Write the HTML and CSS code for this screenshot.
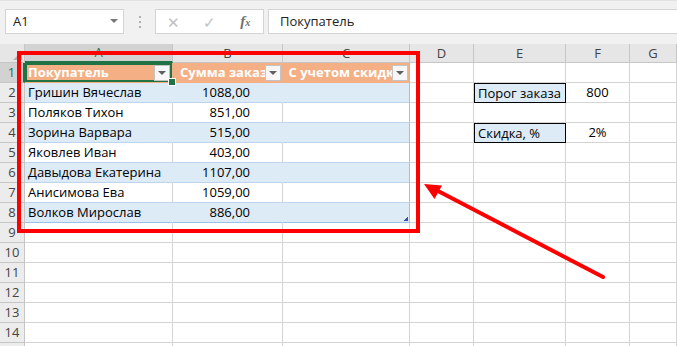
FILE: index.html
```html
<html lang="ru">
<head>
    <meta charset="UTF-8">
    <meta name="viewport" content="width=device-width, initial-scale=1.0">
    <title>Покупатели</title>
    <link rel="stylesheet" href="styles.css">
</head>
<body>

    <div class="toolbar">
        <div class="nameBox">A1<span class="nameArrow"></span></div>
        <div class="dots"><span></span><span></span><span></span></div>
        <div class="fxBox">
            <span class="fxBtn cancel">✕</span>
            <span class="fxBtn enter">✓</span>
            <span class="fxBtn fx"><i>f</i><small>x</small></span>
        </div>
        <div class="formula">Покупатель</div>
    </div>

    <div class="sheet">
        <div class="row colHeads">
            <div class="corner"><span></span></div>
            <div class="colHead active">A</div>
            <div class="colHead">B</div>
            <div class="colHead">C</div>
            <div class="colHead">D</div>
            <div class="colHead">E</div>
            <div class="colHead">F</div>
            <div class="colHead">G</div>
        </div>

        <div class="row">
            <div class="rowHead active">1</div>
            <div class="cell th selected">Покупатель<span class="filter"></span><span class="handle"></span></div>
            <div class="cell th center">Сумма заказа<span class="filter"></span></div>
            <div class="cell th center last">С учетом скидки<span class="filter"></span></div>
            <div class="cell"></div>
            <div class="cell"></div>
            <div class="cell"></div>
            <div class="cell"></div>
        </div>

        <div class="row">
            <div class="rowHead">2</div>
            <div class="cell band">Гришин Вячеслав</div>
            <div class="cell band num">1088,00</div>
            <div class="cell band last"></div>
            <div class="cell"></div>
            <div class="cell param">Порог заказа</div>
            <div class="cell center">800</div>
            <div class="cell"></div>
        </div>

        <div class="row">
            <div class="rowHead">3</div>
            <div class="cell plain">Поляков Тихон</div>
            <div class="cell plain num">851,00</div>
            <div class="cell plain last"></div>
            <div class="cell"></div>
            <div class="cell"></div>
            <div class="cell"></div>
            <div class="cell"></div>
        </div>

        <div class="row">
            <div class="rowHead">4</div>
            <div class="cell band">Зорина Варвара</div>
            <div class="cell band num">515,00</div>
            <div class="cell band last"></div>
            <div class="cell"></div>
            <div class="cell param">Скидка, %</div>
            <div class="cell center">2%</div>
            <div class="cell"></div>
        </div>

        <div class="row">
            <div class="rowHead">5</div>
            <div class="cell plain">Яковлев Иван</div>
            <div class="cell plain num">403,00</div>
            <div class="cell plain last"></div>
            <div class="cell"></div>
            <div class="cell"></div>
            <div class="cell"></div>
            <div class="cell"></div>
        </div>

        <div class="row">
            <div class="rowHead">6</div>
            <div class="cell band">Давыдова Екатерина</div>
            <div class="cell band num">1107,00</div>
            <div class="cell band last"></div>
            <div class="cell"></div>
            <div class="cell"></div>
            <div class="cell"></div>
            <div class="cell"></div>
        </div>

        <div class="row">
            <div class="rowHead">7</div>
            <div class="cell plain">Анисимова Ева</div>
            <div class="cell plain num">1059,00</div>
            <div class="cell plain last"></div>
            <div class="cell"></div>
            <div class="cell"></div>
            <div class="cell"></div>
            <div class="cell"></div>
        </div>

        <div class="row">
            <div class="rowHead">8</div>
            <div class="cell band bottom">Волков Мирослав</div>
            <div class="cell band bottom num">886,00</div>
            <div class="cell band bottom last"><span class="resize"></span></div>
            <div class="cell"></div>
            <div class="cell"></div>
            <div class="cell"></div>
            <div class="cell"></div>
        </div>

        <div id="emptyRows"></div>

        <svg class="markup" width="677" height="302" viewBox="0 44 677 302">
            <rect x="19" y="53" width="399" height="178" fill="none" stroke="#ff0000" stroke-width="4"/>
            <line x1="603" y1="277" x2="438" y2="191" stroke="#ff0000" stroke-width="4" stroke-linecap="round"/>
            <polygon points="424,184 442,185.5 434.5,199" fill="#ff0000"/>
        </svg>
    </div>

    <script>
        // rows 9..14 are empty, plus the sliver of row 15 at the window edge
        var emptyRows = document.getElementById("emptyRows");
        for(var r=9; r<=15; r++){
            var html = '<div class="rowHead">'+(r<15 ? r : '')+'</div>';
            for(var c=0; c<7; c++)
                html += '<div class="cell"></div>';
            var row = document.createElement("div");
            row.className = "row";
            row.innerHTML = html;
            emptyRows.appendChild(row);
        }
    </script>
</body>
</html>
```

FILE: styles.css
```css
body{
    margin: 0;
    font-family: "Open Sans", "Liberation Sans", sans-serif;
    font-size: 13px;
    color: #000;
    background-color: #fff;
    overflow: hidden;
}

.toolbar{
    height: 44px;
    box-sizing: border-box;
    display: flex;
    align-items: flex-start;
    padding: 8px 0 0 5px;
    background-color: #f1f1f1;
    border-top: 1px solid #e2e2e2;
}

.nameBox{
    position: relative;
    box-sizing: border-box;
    width: 119px;
    height: 25px;
    line-height: 23px;
    padding-left: 7px;
    background-color: #fff;
    border: 1px solid #d4d4d4;
    color: #222;
}

.nameArrow{
    position: absolute;
    right: 5px;
    top: 9px;
    border-left: 4px solid transparent;
    border-right: 4px solid transparent;
    border-top: 4px solid #777;
}

.dots{
    width: 31px;
    height: 25px;
    display: flex;
    flex-direction: column;
    align-items: center;
    justify-content: center;
    gap: 3px;
}

.dots span{
    width: 2px;
    height: 2px;
    background-color: #b0b0b0;
}

.fxBox{
    box-sizing: border-box;
    width: 109px;
    height: 25px;
    display: flex;
    align-items: center;
    background-color: #fff;
    border: 1px solid #d4d4d4;
}

.fxBtn{
    width: 36px;
    text-align: center;
    font-size: 15px;
    color: #c0c0c0;
}

.fxBtn.fx{
    font-family: "Liberation Serif", serif;
    font-weight: bold;
    color: #707070;
    font-size: 15px;
}

.fxBtn.fx small{
    font-size: 10px;
    font-style: italic;
}

.formula{
    box-sizing: border-box;
    flex: 1;
    height: 25px;
    line-height: 23px;
    margin-left: 4px;
    margin-right: -2px;
    padding-left: 11px;
    background-color: #fff;
    border: 1px solid #d4d4d4;
    color: #222;
}

.sheet{
    position: relative;
}

.row{
    display: grid;
    grid-template-columns: 25px 148px 110px 127px 64px 92px 64px 1fr;
    height: 20px;
}

.colHeads{
    height: 19px;
}

.corner, .colHead, .rowHead{
    box-sizing: border-box;
    background-color: #e6e6e6;
    border-right: 1px solid #c6c6c6;
    border-bottom: 1px solid #c6c6c6;
    color: #444;
    text-align: center;
}

.corner{
    position: relative;
}

.corner span{
    position: absolute;
    right: 2px;
    bottom: 2px;
    border-left: 9px solid transparent;
    border-bottom: 9px solid #b4b4b4;
}

.colHead{
    line-height: 18px;
}

.colHead.active{
    background-color: #d2d2d2;
    color: #217346;
    border-bottom: 2px solid #217346;
    line-height: 17px;
}

.rowHead{
    line-height: 19px;
    text-align: center;
    background-color: #ececec;
}

.rowHead.active{
    background-color: #d2d2d2;
    color: #217346;
    border-right: 2px solid #217346;
}

.cell{
    position: relative;
    box-sizing: border-box;
    border-right: 1px solid #d4d4d4;
    border-bottom: 1px solid #d4d4d4;
    line-height: 19px;
    padding: 0 3px;
    white-space: nowrap;
    overflow: hidden;
}

.center{
    text-align: center;
}

.num{
    text-align: right;
    padding-right: 32px;
}

.th{
    background-color: #f4b084;
    border-right-color: #f4b084;
    border-bottom-color: #f4b084;
    color: #fff;
    font-weight: bold;
    overflow: visible;
}

.th.center{
    overflow: hidden;
}

.band{
    background-color: #ddebf7;
    border-right-color: #ddebf7;
    border-bottom-color: #bcd4ec;
}

.plain{
    border-bottom-color: #bcd4ec;
}

.last{
    border-right-color: #9bc2e6;
}

.bottom{
    border-bottom-color: #9bc2e6;
}

.filter{
    position: absolute;
    right: 1px;
    top: 2px;
    box-sizing: border-box;
    width: 16px;
    height: 16px;
    background-color: #f7f7f7;
    border: 1px solid #c4c4c4;
}

.filter::after{
    content: "";
    position: absolute;
    left: 3px;
    top: 5px;
    border-left: 4px solid transparent;
    border-right: 4px solid transparent;
    border-top: 4px solid #606060;
}

.selected{
    box-shadow: inset 0 0 0 2px #217346;
}

.selected .filter{
    right: 2px;
}

.handle{
    position: absolute;
    right: -4px;
    bottom: -4px;
    width: 6px;
    height: 6px;
    background-color: #217346;
    border: 1px solid #fff;
    z-index: 2;
}

.resize{
    position: absolute;
    right: 1px;
    bottom: 1px;
    width: 5px;
    height: 5px;
    background: linear-gradient(135deg, transparent 50%, #3b4ea3 50%);
}

.param{
    background-color: #ddebf7;
    border: 1px solid #000;
    padding-left: 3px;
}

.markup{
    position: absolute;
    left: 0;
    top: 0;
    pointer-events: none;
    z-index: 5;
}
```
